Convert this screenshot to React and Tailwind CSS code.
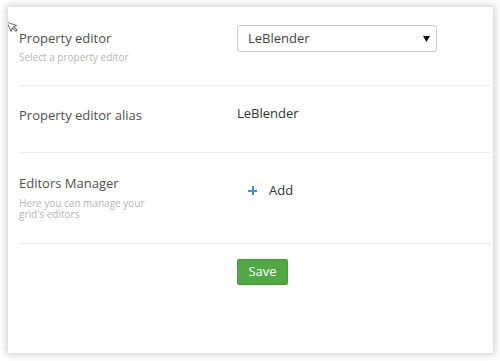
export default function App() {
  const font = { fontFamily: '"Open Sans", "Liberation Sans", sans-serif' };
  return (
    <div className="relative w-[500px] h-[361px] bg-white pt-[7px] pl-[8px]" style={font}>
      <div className="w-[485px] h-[346px] bg-white shadow-[0_0_7px_2px_rgba(0,0,0,0.18)] pl-[11px] pr-[2px]">
        {/* Row 1 */}
        <div className="h-[78px] flex pt-[18px]">
          <div className="w-[218px] pt-[4px]">
            <div className="text-[13px] leading-[18px] text-[#4f4f4f]">Property editor</div>
            <div className="text-[10px] leading-[11px] mt-[5px] text-[#b5b5b5]">Select a property editor</div>
          </div>
          <div className="w-[200px] h-[27px] border border-[#cccccc] rounded-[3px] flex items-center justify-between pl-[10px] pr-[6px]">
            <span className="text-[13px] text-[#444]">LeBlender</span>
            <svg width="7" height="6" viewBox="0 0 7 6"><path d="M0 0 L7 0 L3.5 6 Z" fill="#111" /></svg>
          </div>
        </div>
        <div className="h-px bg-[#eeeeee]" />
        {/* Row 2 */}
        <div className="h-[66px] flex">
          <div className="w-[218px] pt-[20px] text-[13px] leading-[18px] text-[#4f4f4f]">Property editor alias</div>
          <div className="pt-[18px] text-[13px] leading-[18px] text-[#333]">LeBlender</div>
        </div>
        <div className="h-px bg-[#eeeeee]" />
        {/* Row 3 */}
        <div className="h-[90px] flex">
          <div className="w-[218px] pt-[21px]">
            <div className="text-[13px] leading-[18px] text-[#4f4f4f]">Editors Manager</div>
            <div className="text-[10px] leading-[11px] mt-[6px] text-[#b5b5b5] w-[140px]">Here you can manage your grid's editors</div>
          </div>
          <div className="pt-[28px] flex items-start">
            <div className="ml-[11px] mt-[5px] w-[9px] h-[9px] relative">
              <div className="absolute left-0 top-[3.5px] w-[9px] h-[2px] bg-[#3d8fe0]" />
              <div className="absolute left-[3.5px] top-0 w-[2px] h-[9px] bg-[#3d8fe0]" />
            </div>
            <span className="ml-[12px] text-[13px] leading-[18px] text-[#333]">Add</span>
          </div>
        </div>
        <div className="h-px bg-[#eeeeee]" />
        <div className="pl-[218px] pt-[14px]">
          <button className="w-[51px] h-[26px] bg-[#52a844] border border-[#4a9a3c] rounded-[2px] text-white text-[13px] leading-none">Save</button>
        </div>
      </div>
      <svg className="absolute left-[8px] top-[19px]" width="10" height="14" viewBox="0 0 10 14">
        <path d="M1 1 L1 11 L3.5 8.5 L5.5 13 L7 12.3 L5 8 L8.5 8 Z" fill="#fff" stroke="#555" strokeWidth="0.9" strokeLinejoin="round" transform="rotate(-25 5 7)" />
      </svg>
    </div>
  );
}
